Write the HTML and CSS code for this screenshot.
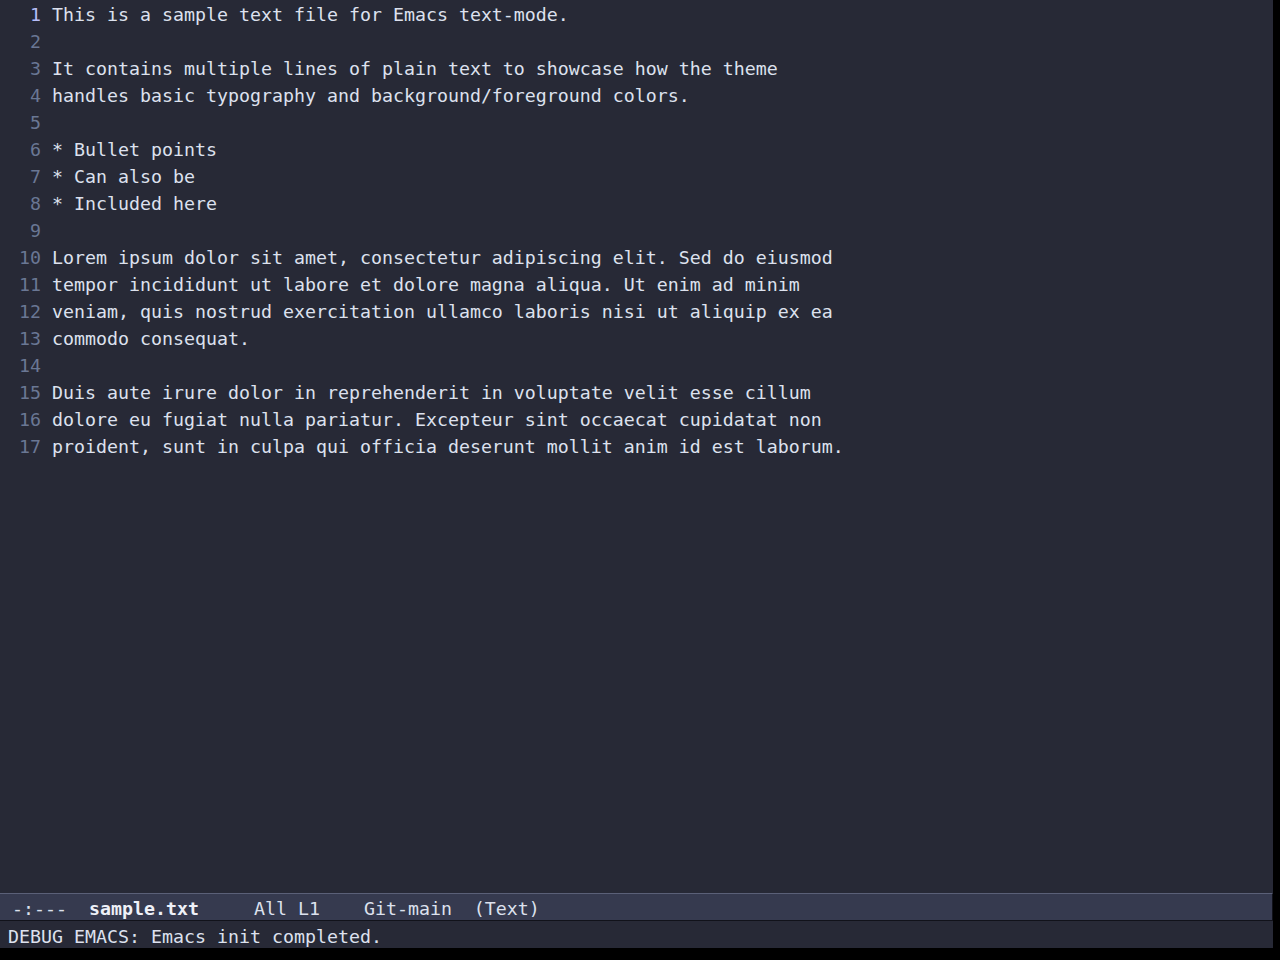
FILE: index.html
```html
<!DOCTYPE html>
<html lang="en">
<head>
  <meta charset="UTF-8" />
  <title>sample.txt - Emacs</title>
  <link rel="stylesheet" href="styles.css">
</head>
<body>
  <div class="frame">
    <div class="buffer">
      <div class="line"><span class="ln current">1</span><span class="tx">This is a sample text file for Emacs text-mode.</span></div>
      <div class="line"><span class="ln">2</span><span class="tx"></span></div>
      <div class="line"><span class="ln">3</span><span class="tx">It contains multiple lines of plain text to showcase how the theme</span></div>
      <div class="line"><span class="ln">4</span><span class="tx">handles basic typography and background/foreground colors.</span></div>
      <div class="line"><span class="ln">5</span><span class="tx"></span></div>
      <div class="line"><span class="ln">6</span><span class="tx">* Bullet points</span></div>
      <div class="line"><span class="ln">7</span><span class="tx">* Can also be</span></div>
      <div class="line"><span class="ln">8</span><span class="tx">* Included here</span></div>
      <div class="line"><span class="ln">9</span><span class="tx"></span></div>
      <div class="line"><span class="ln">10</span><span class="tx">Lorem ipsum dolor sit amet, consectetur adipiscing elit. Sed do eiusmod</span></div>
      <div class="line"><span class="ln">11</span><span class="tx">tempor incididunt ut labore et dolore magna aliqua. Ut enim ad minim</span></div>
      <div class="line"><span class="ln">12</span><span class="tx">veniam, quis nostrud exercitation ullamco laboris nisi ut aliquip ex ea</span></div>
      <div class="line"><span class="ln">13</span><span class="tx">commodo consequat.</span></div>
      <div class="line"><span class="ln">14</span><span class="tx"></span></div>
      <div class="line"><span class="ln">15</span><span class="tx">Duis aute irure dolor in reprehenderit in voluptate velit esse cillum</span></div>
      <div class="line"><span class="ln">16</span><span class="tx">dolore eu fugiat nulla pariatur. Excepteur sint occaecat cupidatat non</span></div>
      <div class="line"><span class="ln">17</span><span class="tx">proident, sunt in culpa qui officia deserunt mollit anim id est laborum.</span></div>
    </div>

    <div class="modeline"> -:---  <b class="bufname">sample.txt</b>     All L1    Git-main  (Text)</div>

    <div class="echo">DEBUG EMACS: Emacs init completed.</div>
  </div>
</body>
</html>
```

FILE: styles.css
```css
html, body {
  margin: 0;
  padding: 0;
  background-color: #000;
}
body {
  width: 1280px;
  height: 960px;
  font-family: 'DejaVu Sans Mono', 'Liberation Mono', monospace;
  font-size: 18.27px;
  color: #cad3f5;
}
.frame {
  width: 1273px;
  height: 948px;
  display: flex;
  flex-direction: column;
  background-color: #272936;
}
.buffer {
  flex: 1;
  padding-top: 1px;
  overflow: hidden;
}
.line {
  display: flex;
  height: 27px;
  line-height: 27px;
  white-space: pre;
}
.ln {
  width: 22px;
  padding-left: 19px;
  padding-right: 11px;
  text-align: right;
  color: #6a7794;
}
.ln.current {
  color: #b7bdf8;
}
.tx {
  color: #dde1ee;
}
.modeline {
  height: 25px;
  padding-top: 1px;
  line-height: 27px;
  padding-left: 1px;
  white-space: pre;
  background-color: #363a4f;
  border-top: 1px solid #5b6078;
  border-bottom: 1px solid #11121a;
  border-right: 1px solid #11121a;
  color: #dde1ee;
}
.bufname {
  font-weight: bold;
  color: #eef0f8;
}
.echo {
  height: 25px;
  padding-top: 2px;
  line-height: 27px;
  padding-left: 8px;
  white-space: pre;
  color: #dde1ee;
}
```
